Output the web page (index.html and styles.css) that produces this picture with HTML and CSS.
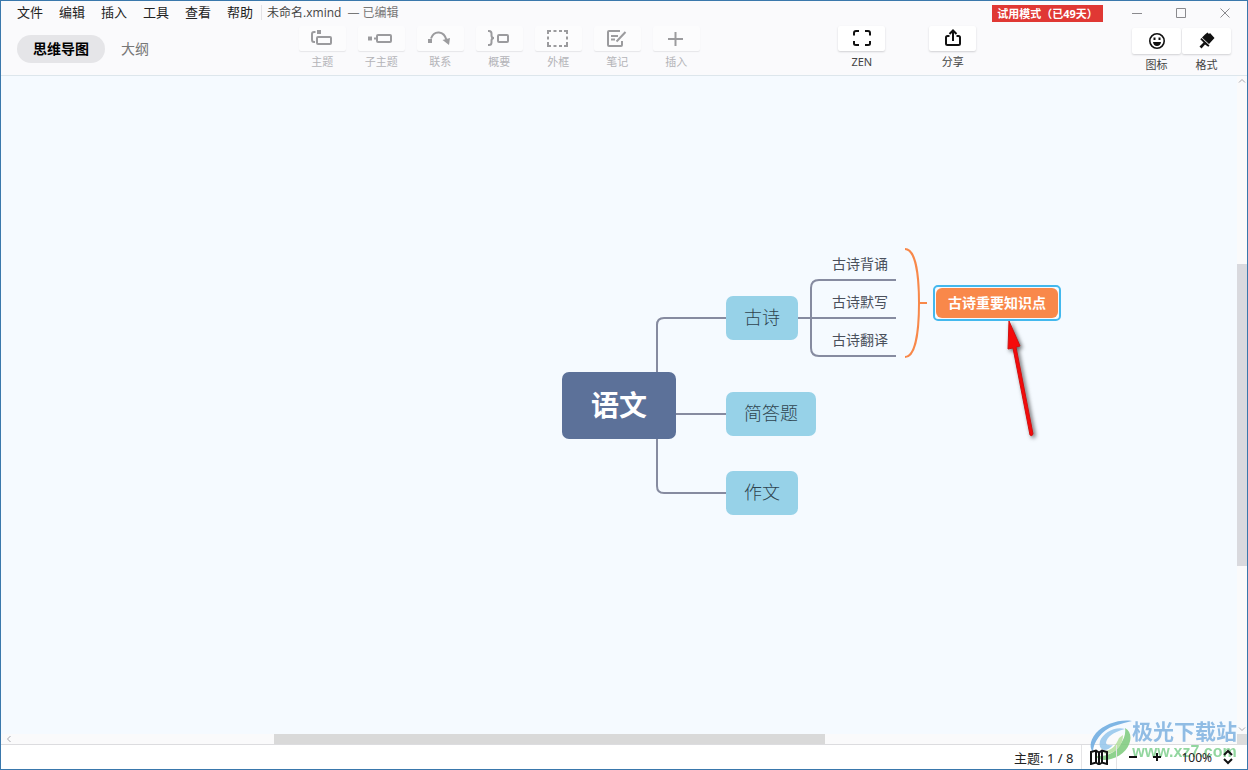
FILE: index.html
```html
<!DOCTYPE html>
<html lang="zh-CN">
<head>
<meta charset="utf-8">
<title>未命名.xmind</title>
<link rel="stylesheet" href="styles.css">
</head>
<body>
<div class="window">
  <header class="header">
    <div class="titlebar">
      <nav class="menu">
        <button class="menu-item">文件</button>
        <button class="menu-item">编辑</button>
        <button class="menu-item">插入</button>
        <button class="menu-item">工具</button>
        <button class="menu-item">查看</button>
        <button class="menu-item">帮助</button>
      </nav>
      <div class="doc"><span class="doc-name">未命名.xmind</span><span class="doc-state">— 已编辑</span></div>
      <span class="trial">试用模式（已49天）</span>
      <div class="win-controls">
        <button class="win-btn" aria-label="最小化"><svg width="12" height="12" viewBox="0 0 12 12"><path d="M1 6.500h10"/></svg></button>
        <button class="win-btn" aria-label="最大化"><svg width="12" height="12" viewBox="0 0 12 12"><path d="M1.500 1.500h9v9h-9z"/></svg></button>
        <button class="win-btn" aria-label="关闭"><svg width="12" height="12" viewBox="0 0 12 12"><path d="M1.500 1.500l9 9M10.500 1.500l-9 9"/></svg></button>
      </div>
    </div>
    <div class="toolbar">
      <div class="tabs">
        <button class="tab tab-on">思维导图</button>
        <button class="tab">大纲</button>
      </div>
      <div class="space space-a"></div>
      <div class="tools">
        <button class="tool"><span class="tile"><svg width="24" height="24" viewBox="0 0 24 24"><rect class="solid" x="7" y="3" width="4" height="4"/><path d="M5.500 5H4Q2 5 2 7v5.500Q2 15 4 15h1"/><rect x="7" y="10" width="14" height="7" rx="1"/></svg></span><span class="tool-label">主题</span></button>
        <button class="tool"><span class="tile"><svg width="24" height="24" viewBox="0 0 24 24"><rect class="solid" x="-1" y="9.500" width="4" height="4"/><path d="M5 11.500h3"/><rect x="8" y="8" width="14" height="7" rx="1"/></svg></span><span class="tool-label">子主题</span></button>
        <button class="tool"><span class="tile"><svg width="24" height="24" viewBox="0 0 24 24"><rect class="solid" x="0" y="12" width="4" height="4"/><path d="M3 11.500C6 3 16 3.500 18.500 13"/><path class="solid" d="M14.500 13l7.500-2-1 7z"/></svg></span><span class="tool-label">联系</span></button>
        <button class="tool"><span class="tile"><svg width="24" height="24" viewBox="0 0 24 24"><path d="M1 4h1q2.500 0 2.500 2.500v2q0 2.500 2.500 2.500q-2.500 0-2.500 2.500v2q0 2.500-2.500 2.500H1"/><rect x="11" y="8" width="10" height="7" rx="1"/></svg></span><span class="tool-label">概要</span></button>
        <button class="tool"><span class="tile"><svg width="24" height="24" viewBox="0 0 24 24"><path d="M2 7V4h3M18 4h3v3M21 15v4h-3M5 19H2v-4M7.500 4h3M13 4h3M7.500 19h3M13 19h3M2 9.500v3M21 9.500v3"/></svg></span><span class="tool-label">外框</span></button>
        <button class="tool"><span class="tile"><svg width="24" height="24" viewBox="0 0 24 24"><path d="M15 4H4Q3 4 3 5v13q0 1 1 1h12q1 0 1-1v-4M6 9h7M6 12.500h4M20.500 5l-8 8.500-1 1"/></svg></span><span class="tool-label">笔记</span></button>
        <button class="tool"><span class="tile"><svg width="24" height="24" viewBox="0 0 24 24"><path d="M4 12h15M11.500 5v14"/></svg></span><span class="tool-label">插入</span></button>
      </div>
      <div class="space space-b"></div>
      <div class="tools tools-live">
        <button class="tool"><span class="tile"><svg width="24" height="24" viewBox="0 0 24 24"><path d="M4 8.500V6q0-2 2-2h3M15 4h3q2 0 2 2v2.500M20 14v2.500q0 1.500-2 1.500h-3M9 18H6q-2 0-2-1.500V14"/></svg></span><span class="tool-label">ZEN</span></button>
        <button class="tool"><span class="tile"><svg width="24" height="24" viewBox="0 0 24 24"><path d="M8.500 9h-2Q5 9 5 10.500v6Q5 18 6.500 18h11q1.500 0 1.500-1.500v-6Q19 9 17.500 9h-2M12 14V3.500M8.500 7L12 3.500 15.500 7"/></svg></span><span class="tool-label">分享</span></button>
      </div>
      <div class="space space-c"></div>
      <div class="panel-tools">
        <button class="tool"><span class="tile"><svg width="24" height="24" viewBox="0 0 24 24"><circle cx="12" cy="12" r="7.200" stroke-width="1.600"/><path class="solid" d="M8 13h8q-.5 4-4 4t-4-4zM8.500 8.500h2v2.500h-2zM13.500 8.500h2v2.500h-2z"/></svg></span><span class="tool-label">图标</span></button>
        <button class="tool"><span class="tile"><svg width="24" height="24" viewBox="0 0 24 24"><path class="solid" d="M10 5.500l2.500-2 1.500 1.500 1-1 4.500 5-5.500 6-7-6.500zM6.500 9l8 7.500-1.200 1.300-3.300-2.300L6.500 19.500l-2-2 4-4L5.300 10.300z"/></svg></span><span class="tool-label">格式</span></button>
      </div>
    </div>
  </header>

  <main class="workspace">
    <section class="canvas">
      <svg class="links" width="1100" height="560" viewBox="1 76 1100 560">
        <g fill="none" stroke="#868ba0" stroke-width="2">
          <path d="M657 373V325q0-7 7-7h63M676 414h51M657 438v48q0 7 7 7h63"/>
          <path d="M798 318h98M896 280h-77q-8 0-8 8v60q0 8 8 8h77"/>
        </g>
        <path d="M905 249C915 249 919 273 919 303S915 357 905 357M919 303h8" fill="none" stroke="#f8884a" stroke-width="2"/>
      </svg>
      <div class="node root">语文</div>
      <div class="node branch branch-poem">古诗</div>
      <div class="node branch branch-short">简答题</div>
      <div class="node branch branch-essay">作文</div>
      <div class="node leaf leaf-a">古诗背诵</div>
      <div class="node leaf leaf-b">古诗默写</div>
      <div class="node leaf leaf-c">古诗翻译</div>
      <div class="node summary"><span class="summary-text">古诗重要知识点</span></div>
      <svg class="pointer" width="50" height="130" viewBox="1000 315 50 130">
        <path d="M1008 320L1019 345L1015 346L1032 433Q1031 436 1029 434L1012 347L1007 348Z" fill="#f50a0a" stroke="#d01010" stroke-width="1"/>
      </svg>
    </section>
    <div class="vscroll">
      <svg class="chev" width="8" height="8" viewBox="0 0 8 8"><path d="M1 5.500l3-3 3 3"/></svg>
      <div class="v-before"></div><div class="v-thumb"></div><div class="v-after"></div>
      <svg class="chev" width="8" height="8" viewBox="0 0 8 8"><path d="M1 2.500l3 3 3-3"/></svg>
    </div>
    <div class="hscroll">
      <svg class="chev" width="8" height="8" viewBox="0 0 8 8"><path d="M5.500 1l-3 3 3 3"/></svg>
      <div class="h-before"></div><div class="h-thumb"></div><div class="h-after"></div>
    </div>
    <div class="corner"></div>
  </main>

  <div class="mark">
    <svg width="42" height="40" viewBox="0 0 42 40">
      <path d="M42 1C30-1 14 4 6 13 0 20-1 28 3 32 3 22 12 10 24 6q9-3 18-5z" fill="#6aaae0"/>
      <path d="M35 9C25 6 13 13 10 21q-2 7 4 9 5 0 9-5-6 1-7-2 1-9 19-14z" fill="#94c6ec"/>
      <path d="M35 8c11 6 5 26-14 31-7 2-12 1-16-3 11 1 20-3 25-11 4-6 6-11 5-17z" fill="#7ccb7b"/>
      <path d="M13 31c9 0 13-6 16-13l4-3c0 10-7 18-16 19q-4 0-4-3z" fill="#b2df9c"/>
    </svg>
    <div class="mark-text"><span class="mark-name">极光下载站</span><span class="mark-url">www.xz7.com</span></div>
  </div>

  <footer class="status">
    <span class="count">主题: 1 / 8</span>
    <button class="status-btn map-btn" aria-label="导航图"><svg width="18" height="16" viewBox="0 0 18 16"><path d="M1 3l5-1.500 3 2 3-2L17 3v12l-5-1.500-3 2-3-2L1 15zM6 2v12M9 3.500v12M12 2v12"/></svg></button>
    <button class="status-btn" aria-label="缩小"><svg width="12" height="12" viewBox="0 0 12 12"><path d="M2 6h8"/></svg></button>
    <button class="status-btn" aria-label="放大"><svg width="12" height="12" viewBox="0 0 12 12"><path d="M2 6h8M6 2v8"/></svg></button>
    <button class="status-btn zoom">100%<svg width="12" height="16" viewBox="0 0 12 16"><path d="M2 6l4-4 4 4M2 10l4 4 4-4"/></svg></button>
  </footer>
</div>
</body>
</html>
```
FILE: styles.css
```css
* { box-sizing: border-box; }
body {
  margin: 0;
  font-family: "Noto Sans", "Noto Sans CJK SC", sans-serif;
  font-size: 13px;
  color: #222;
}
button {
  margin: 0;
  padding: 0;
  border: 0;
  background: none;
  font: inherit;
  color: inherit;
}
svg { display: block; }
.window {
  position: relative;
  display: flex;
  flex-direction: column;
  height: 100vh;
  border: 1px solid #3a78ac;
  background: #fff;
  overflow: hidden;
}

.header {
  background: #fafafc;
  border-bottom: 1px solid #dde6ec;
}
.titlebar {
  display: flex;
  height: 23px;
}
.menu {
  display: flex;
  align-items: flex-start;
  padding-left: 8px;
}
.menu-item {
  padding: 0 8px;
  line-height: 22px;
}
.doc {
  display: flex;
  gap: 6px;
  align-self: flex-start;
  margin-top: 4px;
  padding-left: 5px;
  border-left: 1px solid #e2e2e6;
  font-family: "Open Sans", "Noto Sans CJK SC", sans-serif;
  font-size: 12px;
  line-height: 15px;
  color: #444;
}
.doc-state { color: #777; }
.trial {
  margin: 4px 12px 0 auto;
  height: 17px;
  width: 111px;
  background: #e03834;
  color: #fff;
  font-size: 11px;
  font-weight: 700;
  line-height: 17px;
  text-align: center;
  white-space: nowrap;
}
.win-controls { display: flex; }
.win-btn {
  display: flex;
  align-items: center;
  justify-content: center;
  width: 44px;
}
.win-btn svg {
  fill: none;
  stroke: #8a8a8e;
  stroke-width: 1;
}

.toolbar {
  display: flex;
  align-items: flex-start;
  height: 51px;
  padding: 0 16px;
}
.tabs {
  display: flex;
  gap: 16px;
  padding-top: 11px;
}
.tab {
  height: 28px;
  font-size: 14px;
  line-height: 28px;
  color: #777;
}
.tab-on {
  padding: 0 16px;
  border-radius: 14px;
  background: #e5e5e8;
  color: #000;
  font-weight: 700;
}
.space-a { flex: 150; }
.space-b { flex: 139; }
.space-c { flex: 156; }
.tools {
  display: flex;
  gap: 12px;
  padding-top: 2px;
  color: #9b9b9e;
}
.tools-live {
  gap: 44px;
  color: #111;
}
.tool {
  display: flex;
  flex-direction: column;
  align-items: center;
  gap: 3px;
  width: 47px;
}
.tile {
  display: flex;
  align-items: center;
  justify-content: center;
  width: 100%;
  height: 25px;
  border-radius: 2px;
  background: #fcfcfd;
  box-shadow: 0 1px 1px #e6e6e9;
}
.tile svg {
  overflow: visible;
  fill: none;
  stroke: currentColor;
  stroke-width: 2;
}
.tile .solid {
  fill: currentColor;
  stroke: none;
}
.tool-label {
  font-size: 11px;
  line-height: 16px;
  color: #b4b4b8;
}
.tools-live .tile,
.panel-tools .tile {
  background: #fff;
  box-shadow: 0 1px 2px #d0d0d4;
}
.tools-live .tool-label,
.panel-tools .tool-label { color: #444; }
.panel-tools {
  display: flex;
  gap: 1px;
  padding-top: 4px;
  color: #111;
}
.panel-tools .tool { width: 49px; }
.panel-tools .tile { height: 26px; }

.workspace {
  flex: 1;
  min-height: 0;
  display: grid;
  grid-template: minmax(0, 1fr) 10px / minmax(0, 1fr) 10px;
  border-bottom: 1px solid #dcdcdf;
}
.canvas {
  position: relative;
  overflow: hidden;
  background: #f5faff;
}
.links {
  position: absolute;
  left: 0;
  top: 0;
}
.node {
  position: absolute;
  white-space: nowrap;
}
.root {
  left: 561px;
  top: 296px;
  padding: 0 29px;
  border-radius: 7px;
  background: #5c7199;
  color: #fff;
  font-size: 28px;
  font-weight: 700;
  line-height: 67px;
}
.branch {
  left: 725px;
  height: 44px;
  padding: 0 18px;
  border-radius: 7px;
  background: #97d2e8;
  color: #2f444f;
  font-size: 18px;
  font-weight: 300;
  line-height: 42px;
}
.branch-poem { top: 220px; }
.branch-short { top: 316px; }
.branch-essay { top: 395px; }
.leaf {
  left: 831px;
  color: #4a505c;
  font-size: 14px;
  line-height: 20px;
}
.leaf-a { top: 178px; }
.leaf-b { top: 216px; }
.leaf-c { top: 254px; }
.summary {
  left: 932px;
  top: 209px;
  padding: 1px;
  border: 2px solid #43b8ee;
  border-radius: 5px;
}
.summary-text {
  display: block;
  padding: 0 12px;
  border-radius: 6px;
  background: #f9884a;
  color: #fff;
  font-size: 14px;
  font-weight: 700;
  line-height: 30px;
}
.pointer {
  position: absolute;
  left: 1000px;
  top: 240px;
  filter: drop-shadow(2px 2px 2px #0009);
}
.chev {
  flex: none;
  fill: none;
  stroke: #a8a8ae;
  stroke-width: 1;
}
.vscroll,
.hscroll {
  display: flex;
  align-items: center;
  background: #fafafb;
}
.vscroll {
  flex-direction: column;
  padding: 1px 0;
}
.hscroll { padding-left: 4px; }
.v-before { flex: 179; }
.v-thumb {
  flex: 302;
  width: 100%;
  background: #d9d9de;
}
.v-after { flex: 159; }
.h-before { flex: 261; }
.h-thumb {
  flex: 551;
  align-self: stretch;
  background: #d9d9d9;
}
.h-after { flex: 412; }
.corner { background: #dcdcdc; }

.status {
  position: relative;
  display: flex;
  align-items: center;
  justify-content: flex-end;
  height: 24px;
  padding-right: 13px;
}
.count { padding-right: 8px; }
.status-btn {
  display: flex;
  align-items: center;
  justify-content: center;
  width: 24px;
}
.status-btn svg {
  fill: none;
  stroke: #111;
  stroke-width: 2;
}
.map-btn {
  width: 36px;
  height: 24px;
  margin-right: 4px;
  border: solid #e4e4e6;
  border-width: 0 1px;
}
.zoom {
  gap: 10px;
  width: auto;
  padding-left: 12px;
  font-size: 12px;
}
.mark {
  position: absolute;
  right: 10px;
  bottom: 8px;
  display: flex;
  align-items: center;
  opacity: 0.85;
  pointer-events: none;
}
.mark-text {
  display: flex;
  flex-direction: column;
  align-items: center;
  white-space: nowrap;
}
.mark-name {
  color: #7fb2e0;
  font-size: 21px;
  font-weight: 700;
  line-height: 24px;
}
.mark-url {
  color: #7fcf8e;
  font-family: "Liberation Sans", sans-serif;
  font-size: 16px;
  line-height: 18px;
  font-weight: 700;
}
```
